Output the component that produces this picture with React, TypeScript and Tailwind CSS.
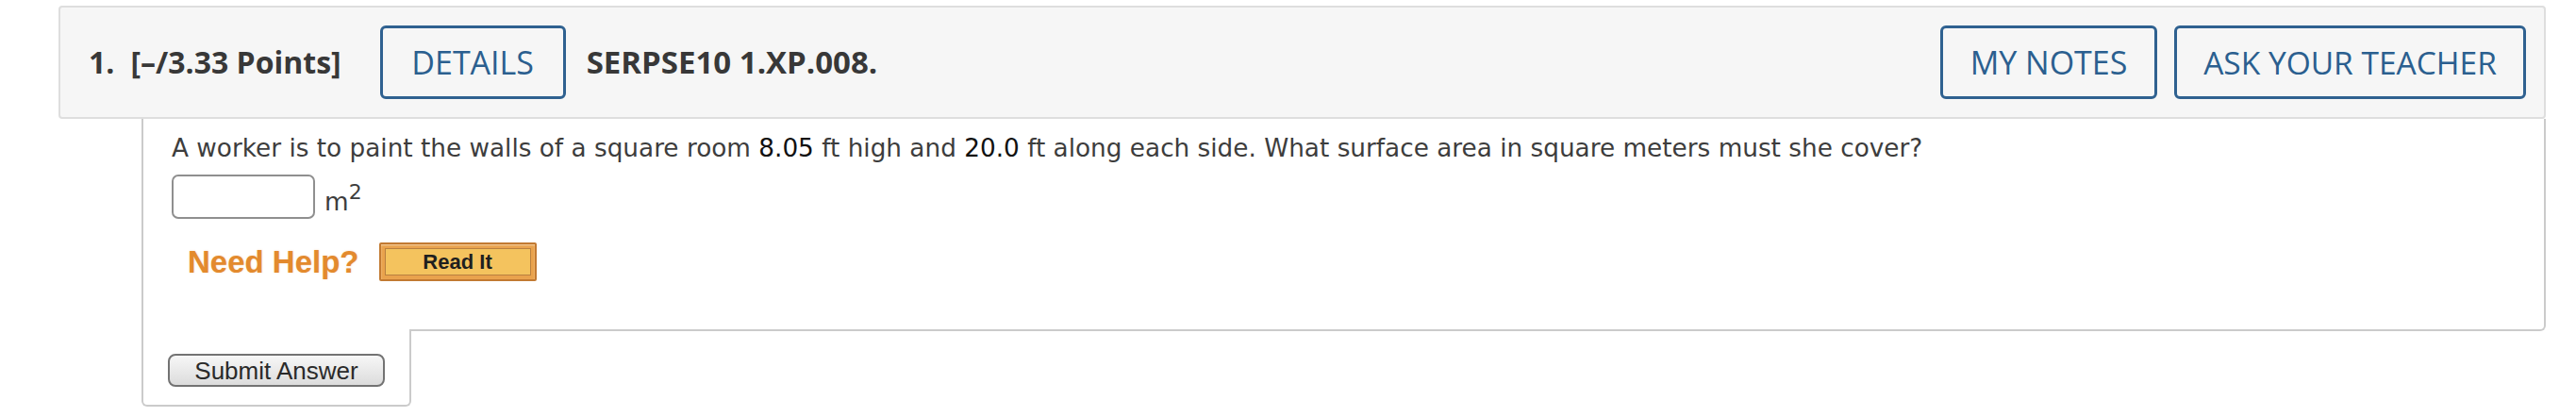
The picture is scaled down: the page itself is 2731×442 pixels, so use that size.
import React from "react";

export default function App() {
  return (
    <div className="w-[2731px] h-[442px] bg-white pt-[6px] pl-[62px] pr-[32px] overflow-hidden">
      <div className="h-[120px] flex items-center bg-[#f6f6f6] border-2 border-[#dedede] rounded-[4px] pl-[30px] pr-[19px] font-['Open_Sans',sans-serif] text-[32px] text-[#383838]">
        <span className="font-bold">1.</span>
        <span className="font-bold ml-[17px]">[–/3.33 Points]</span>
        <button className="ml-[41px] w-[197px] h-[78px] border-[3px] border-[#2f6190] rounded-[6px] text-[#2b5f8f] text-[34px] font-normal">
          DETAILS
        </button>
        <span className="font-bold ml-[22px] text-[33px]">SERPSE10 1.XP.008.</span>
        <div className="ml-auto flex gap-[18px]">
          <button className="w-[230px] h-[78px] border-[3px] border-[#2f6190] rounded-[6px] text-[#2b5f8f] text-[34px] font-normal">
            MY NOTES
          </button>
          <button className="w-[373px] h-[78px] border-[3px] border-[#2f6190] rounded-[6px] text-[#2b5f8f] text-[33.5px] font-normal">
            ASK YOUR TEACHER
          </button>
        </div>
      </div>
      <div className="ml-[88px]">
        <div className="h-[225px] border-x-2 border-b-2 border-[#cbcbcb] rounded-br-[6px] pl-[30px] pt-[12px] font-['DejaVu_Sans',sans-serif] text-[26.3px] text-[#3d3d3d]">
          <p className="leading-[39px]">
            A worker is to paint the walls of a square room <span className="text-[#111]">8.05</span> ft high and{" "}
            <span className="text-[#111]">20.0</span> ft along each side. What surface area in square meters must she cover?
          </p>
          <div className="flex items-center mt-[8px]">
            <div className="w-[152px] h-[47px] border-2 border-[#8f8f8f] rounded-[7px] bg-white"></div>
            <span className="ml-[10px] leading-none mt-[4px]">
              m<span className="text-[22px] align-[12px]">2</span>
            </span>
          </div>
          <div className="flex items-center mt-[25px] ml-[17px] font-['Liberation_Sans',Arial,sans-serif]">
            <span className="text-[33px] font-bold text-[#e38a2e] leading-none [text-shadow:0_0_2px_rgba(227,138,46,0.35)]">
              Need Help?
            </span>
            <div className="ml-[21px] w-[167px] h-[41px] bg-[#e9a24c] border-2 border-[#c27a32] rounded-[2px] p-[4px] shadow-[inset_0_1px_2px_rgba(255,255,255,0.5)]">
              <div className="w-full h-full bg-[#f4c35e] border border-[#b98040] flex items-center justify-center text-[22px] font-bold text-[#1f1f1f] leading-none">
                Read It
              </div>
            </div>
          </div>
        </div>
        <div className="-mt-[2px] w-[286px] h-[82px] bg-white border-x-2 border-b-2 border-[#cbcbcb] rounded-b-[6px] pl-[26px] pt-[26px]">
          <button className="w-[230px] h-[35px] border-2 border-[#737373] rounded-[8px] bg-gradient-to-b from-[#f7f7f7] to-[#dcdcdc] font-['Liberation_Sans',Arial,sans-serif] text-[26px] text-[#2a2a2a] leading-none">
            Submit Answer
          </button>
        </div>
      </div>
    </div>
  );
}
